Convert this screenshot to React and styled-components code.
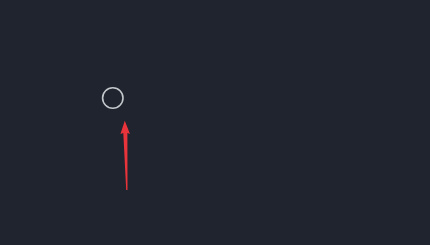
import React from "react";
import styled, { createGlobalStyle } from "styled-components";

const Global = createGlobalStyle`
  html, body { margin: 0; padding: 0; background: #1f242e; }
  body { font-family: "Liberation Sans", Arial, sans-serif; }
`;

const Canvas = styled.div`
  width: 430px;
  height: 245px;
  background: #1f242e;
  overflow: hidden;
`;

const Drawing = styled.svg`
  display: block;
  width: 430px;
  height: 245px;
`;

export default function App() {
  return (
    <>
      <Global />
      <Canvas>
        <Drawing viewBox="0 0 430 245">
          <circle cx="112.8" cy="98" r="10.2" fill="none" stroke="#c4c8cc" strokeWidth="1.6" />
          <path
            d="M124.8 120.8 L130 134 L127.4 133 L127.5 190 L126.2 190 L123.3 133 L120.4 134 Z"
            fill="#ea343b"
          />
        </Drawing>
      </Canvas>
    </>
  );
}
